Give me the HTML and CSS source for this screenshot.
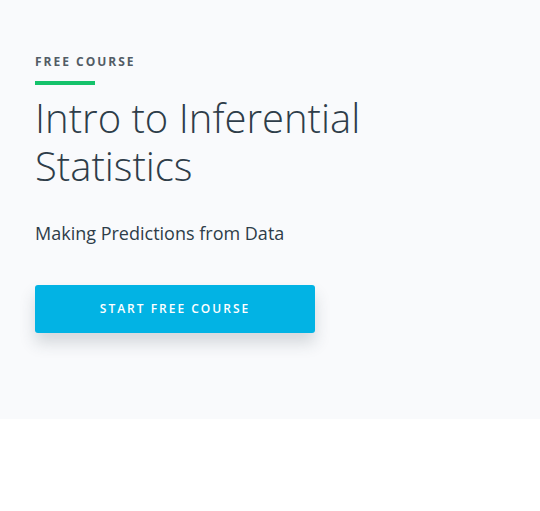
FILE: index.html
```html
<!DOCTYPE html>
<html>
<head>
<meta charset="utf-8">
<link rel="stylesheet" href="styles.css">
</head>
<body>
<section class="hero">
  <div class="eyebrow">FREE COURSE</div>
  <div class="rule"></div>
  <h1 class="title">Intro to Inferential Statistics</h1>
  <p class="subtitle">Making Predictions from Data</p>
  <a class="cta" href="#">START FREE COURSE</a>
</section>
</body>
</html>
```
FILE: styles.css
```css
html, body {
  margin: 0;
  padding: 0;
  background: #ffffff;
}
body {
  font-family: "Open Sans", "Noto Sans", sans-serif;
  color: #2e3d49;
}
.hero {
  background: #f9fafc;
  height: 419px;
  box-sizing: border-box;
  padding: 53px 35px 0 35px;
  display: flex;
  flex-direction: column;
  align-items: flex-start;
}
.eyebrow {
  font-size: 12px;
  font-weight: 700;
  letter-spacing: 2px;
  color: #525c65;
  line-height: 18px;
}
.rule {
  width: 60px;
  height: 4px;
  background: #15c26b;
  margin-top: 10px;
}
.title {
  margin: 9px 0 0 0;
  font-size: 40px;
  font-weight: 300;
  line-height: 48px;
  width: 380px;
  color: #2e3d49;
}
.subtitle {
  margin: 31px 0 0 0;
  font-size: 18px;
  line-height: 24px;
}
.cta {
  margin-top: 40px;
  width: 280px;
  height: 48px;
  box-sizing: border-box;
  padding-bottom: 2px;
  display: flex;
  align-items: center;
  justify-content: center;
  background: #02b3e4;
  color: #ffffff;
  text-decoration: none;
  border-radius: 3px;
  font-size: 12px;
  font-weight: 600;
  letter-spacing: 2px;
  box-shadow: 0 10px 16px rgba(46, 60, 73, 0.18);
}
```
